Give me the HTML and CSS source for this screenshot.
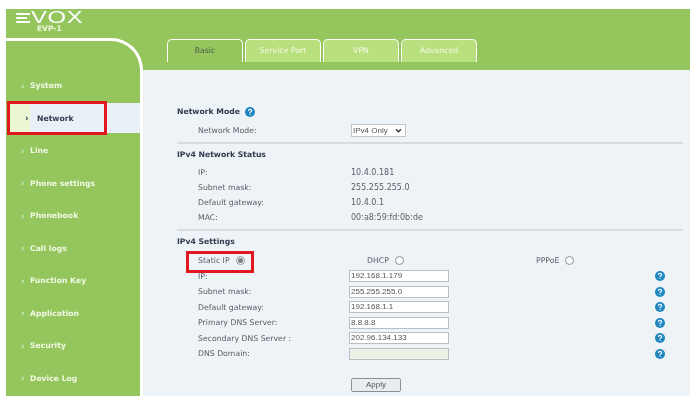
FILE: index.html
```html
<!DOCTYPE html>
<html lang="en">
<head>
<meta charset="utf-8">
<title>EVOX EVP-1 Network</title>
<link rel="stylesheet" href="styles.css">
</head>
<body>
<div class="frame">
  <header class="brand">
    <div class="logo"><span class="logo-e"><i></i><i></i><i></i></span><span class="logo-text">VOX</span></div>
    <div class="model">EVP-1</div>
  </header>
  <div class="body">
    <nav class="sidebar">
      <a class="item"><span class="chev">›</span>System</a>
      <a class="item active"><span class="chev">›</span>Network<span class="mark mark-net"></span></a>
      <a class="item"><span class="chev">›</span>Line</a>
      <a class="item"><span class="chev">›</span>Phone settings</a>
      <a class="item"><span class="chev">›</span>Phonebook</a>
      <a class="item"><span class="chev">›</span>Call logs</a>
      <a class="item"><span class="chev">›</span>Function Key</a>
      <a class="item"><span class="chev">›</span>Application</a>
      <a class="item"><span class="chev">›</span>Security</a>
      <a class="item"><span class="chev">›</span>Device Log</a>
    </nav>
    <div class="right">
      <div class="tabs">
        <div class="tab current">Basic</div>
        <div class="tab">Service Port</div>
        <div class="tab">VPN</div>
        <div class="tab">Advanced</div>
      </div>
      <main class="content">
        <section class="section first">
          <h2 class="title">Network Mode <svg class="help" viewBox="0 0 10 10"><use href="#q"/></svg></h2>
          <div class="row"><span class="label">Network Mode:</span><span class="select">IPv4 Only<svg class="caret" viewBox="0 0 8 6"><path d="M1 1.5 4 4.5 7 1.5" fill="none" stroke="#333" stroke-width="1.6"/></svg></span></div>
        </section>
        <section class="section status">
          <h2 class="title">IPv4 Network Status</h2>
          <div class="row"><span class="label">IP:</span><span class="value">10.4.0.181</span></div>
          <div class="row"><span class="label">Subnet mask:</span><span class="value">255.255.255.0</span></div>
          <div class="row"><span class="label">Default gateway:</span><span class="value">10.4.0.1</span></div>
          <div class="row"><span class="label">MAC:</span><span class="value">00:a8:59:fd:0b:de</span></div>
        </section>
        <section class="section settings">
          <h2 class="title">IPv4 Settings</h2>
          <div class="row modes">
            <span class="mode mode-static">Static IP<span class="radio on"></span><span class="mark mark-ip"></span></span>
            <span class="mode mode-dhcp">DHCP<span class="radio"></span></span>
            <span class="mode mode-pppoe">PPPoE<span class="radio"></span></span>
          </div>
          <div class="row"><span class="label">IP:</span><span class="input">192.168.1.179</span><svg class="help end" viewBox="0 0 10 10"><use href="#q"/></svg></div>
          <div class="row"><span class="label">Subnet mask:</span><span class="input">255.255.255.0</span><svg class="help end" viewBox="0 0 10 10"><use href="#q"/></svg></div>
          <div class="row"><span class="label">Default gateway:</span><span class="input">192.168.1.1</span><svg class="help end" viewBox="0 0 10 10"><use href="#q"/></svg></div>
          <div class="row"><span class="label">Primary DNS Server:</span><span class="input">8.8.8.8</span><svg class="help end" viewBox="0 0 10 10"><use href="#q"/></svg></div>
          <div class="row"><span class="label">Secondary DNS Server :</span><span class="input">202.96.134.133</span><svg class="help end" viewBox="0 0 10 10"><use href="#q"/></svg></div>
          <div class="row"><span class="label">DNS Domain:</span><span class="input disabled"></span><svg class="help end" viewBox="0 0 10 10"><use href="#q"/></svg></div>
          <div class="actions"><span class="apply">Apply</span></div>
        </section>
      </main>
    </div>
  </div>
</div>
<svg class="defs" width="0" height="0"><defs><g id="q"><circle cx="5" cy="5" r="5" fill="#1f86c0"/><path d="M3.4 3.9C3.4 2.9 4.1 2.4 5 2.4S6.7 2.9 6.7 3.8C6.7 4.8 5 4.9 5 6" fill="none" stroke="#e8f3fa" stroke-width="1.2"/><rect x="4.4" y="6.7" width="1.2" height="1.2" fill="#e8f3fa"/></g></defs></svg>
</body>
</html>
```
FILE: styles.css
```css
* { box-sizing: border-box; }
html, body { margin: 0; padding: 0; background: #fff; overflow: hidden; }
body { height: 400px; padding: 9px 5px 4px 6px; font-family: "DejaVu Sans", sans-serif; font-size: 7.75px; color: #5b6068; }
.frame { height: 387px; background: #95c65e; display: flex; flex-direction: column; filter: blur(0.35px); overflow: hidden; }
.brand { height: 29px; padding-left: 10px; padding-top: 3px; flex: none; color: #fff; }
.logo { display: flex; align-items: center; height: 12px; }
.logo-e { display: flex; flex-direction: column; justify-content: space-between; width: 14px; height: 10px; }
.logo-e i { display: block; height: 2px; background: #fff; border-radius: 1px 0 0 1px; }
.logo-e i:nth-child(2) { width: 11px; }
.logo-text { font-family: "Liberation Sans", sans-serif; font-size: 17px; line-height: 12px; letter-spacing: 0.5px; transform: scaleX(1.4); transform-origin: left center; margin-left: 1px; }
.model { font-size: 7.5px; font-weight: 700; line-height: 7px; margin: 1px 0 0 21px; color: #eef6df; }
.body { flex: 1; display: flex; min-height: 0; }
.sidebar { width: 137px; flex: none; padding-top: 28.5px; border-top: 3px solid #fff; border-right: 3px solid #fff; border-top-right-radius: 32px; display: flex; flex-direction: column; }
.item { height: 32.5px; flex: none; display: flex; align-items: center; padding-left: 15px; font-weight: 700; font-size: 7.7px; color: #f1f8e4; position: relative; }
.chev { width: 9px; font-size: 9px; font-weight: 400; }
.item.active { background: linear-gradient(90deg, #ebf6d3 0, #ebf6d3 20px, #e9f0f7 20px); color: #2f3a4c; padding-left: 15px; margin-left: 4px; height: 30px; margin-top: 1px; margin-bottom: 1.5px; }
.item.active .chev { color: #2f3a4c; font-weight: 700; width: 12px; }
.mark { position: absolute; border: 3px solid #e2161f; pointer-events: none; }
.mark-net { left: -3px; top: -2px; width: 100px; height: 34px; }
.right { flex: 1; display: flex; flex-direction: column; min-width: 0; }
.tabs { height: 32px; flex: none; display: flex; gap: 2px; padding: 1px 0 0 24px; }
.tab { width: 76px; height: 23px; border: 1px solid #fff; border-bottom: 0; border-radius: 5px 5px 0 0; background: #b9e07e; color: #f4fae6; font-size: 7.8px; text-align: center; line-height: 21px; }
.tab.current { background: #95c65e; color: #4a5a45; }
.content { flex: 1; background: #eef3f7; padding: 35px 0 0 34px; min-height: 0; }
.section { margin-right: 7px; }
.status, .settings { border-top: 2px solid #d6dde1; }
.status { margin-top: 4px; padding-top: 3px; height: 87px; }
.settings { padding-top: 4px; }
.title { margin: 0; font-size: 7.7px; font-weight: 700; color: #2f3a4c; line-height: 14px; display: flex; align-items: center; gap: 5px; height: 14px; }
.row { display: flex; align-items: center; height: 15.5px; padding-left: 21px; position: relative; }
.first .row { margin-top: 3px; height: 16px; }
.status .row { height: 15px; }
.status .title { margin-bottom: 3px; height: 15px; }
.settings .title { margin-bottom: 3px; }
.label { width: 151px; flex: none; }
.value { padding-left: 2px; font-size: 8px; }
.select { width: 55px; height: 13px; background: #fff; border: 1px solid #c2c6c8; font-size: 8px; display: flex; align-items: center; justify-content: space-between; padding: 0 3px 0 1px; color: #555; font-family: "Liberation Sans", sans-serif; margin-left: 2px; }
.caret { width: 7px; height: 5px; }
.input { width: 100px; height: 12px; background: #fff; border: 1px solid #b9bec2; font-family: "Liberation Sans", sans-serif; font-size: 8px; line-height: 10px; padding-left: 1px; color: #555; }
.input.disabled { background: #eef2e6; }
.help { width: 10px; height: 10px; flex: none; }
.help.end { margin-left: 206px; }
.modes { height: 16.5px; }
.mode { display: flex; align-items: center; gap: 6px; position: relative; }
.mode-static { width: 169px; }
.mode-dhcp { width: 169px; }
.radio { width: 9px; height: 9px; border: 1px solid #8f9498; border-radius: 50%; background: #f7f9fa; display: block; position: relative; }
.radio.on::after { content: ""; position: absolute; inset: 1px; background: #7b8085; border-radius: 50%; }
.mark-ip { left: -12px; top: -5px; width: 68px; height: 22px; }
.actions { padding: 16px 0 0 174px; }
.apply { display: block; width: 50px; height: 14px; background: #e9edf0; border: 1px solid #8b8f92; border-radius: 2px; text-align: center; font-size: 8px; line-height: 12px; color: #555; font-family: "Liberation Sans", sans-serif; }
.defs { position: absolute; }
```
